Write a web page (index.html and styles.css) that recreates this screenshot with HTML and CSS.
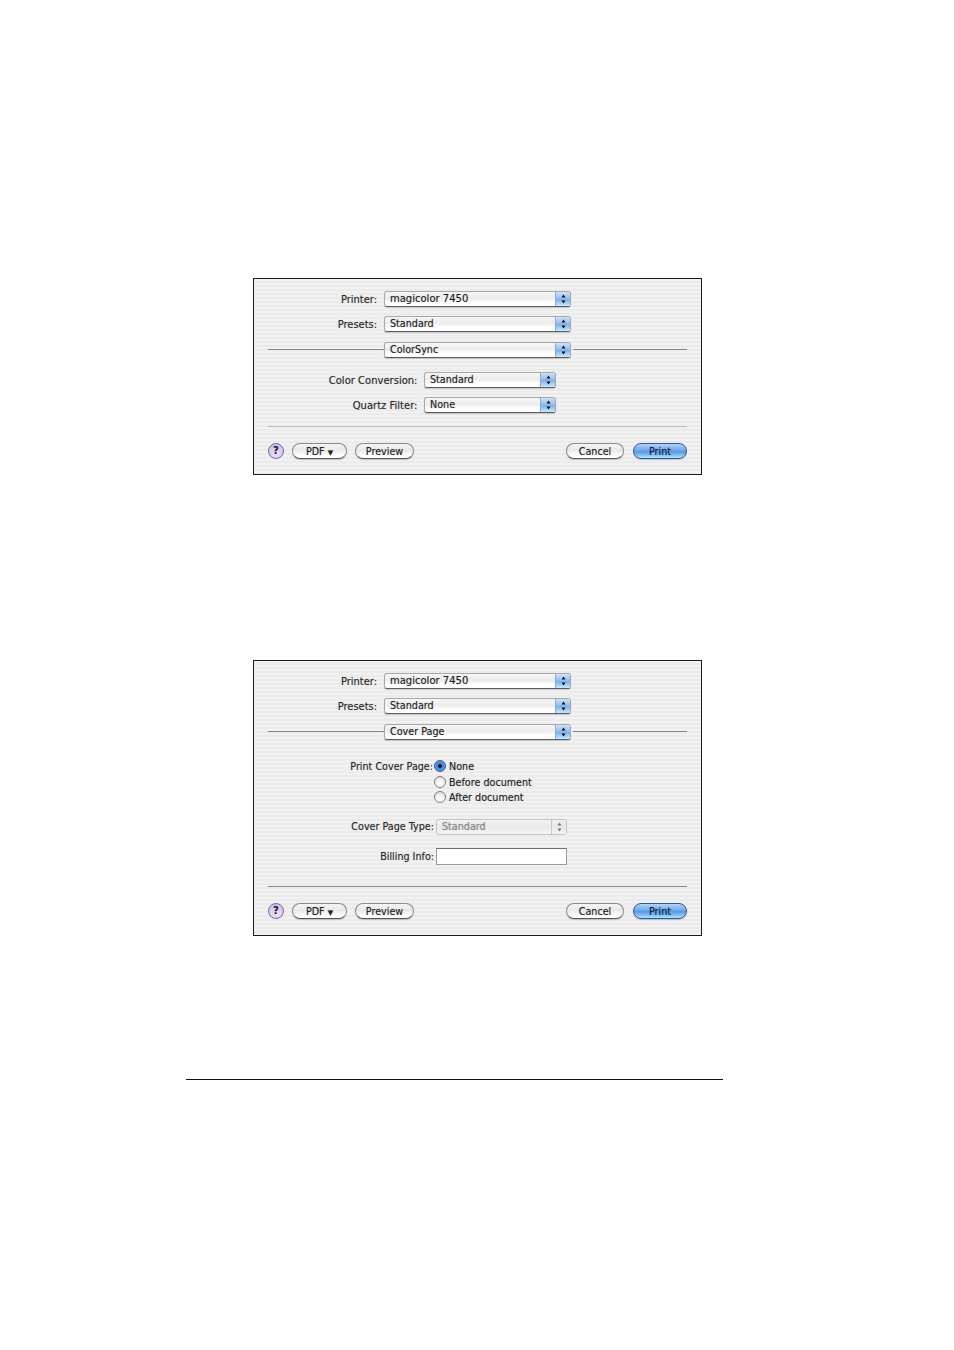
FILE: index.html
```html
<!DOCTYPE html>
<html lang="en">
<head>
<meta charset="utf-8">
<title>Print dialogs</title>
<link rel="stylesheet" href="styles.css">
</head>
<body>
<main class="page">
  <section class="dialog first">
    <div class="row main"><span class="label">Printer:</span><div class="select"><span class="value model">magicolor 7450</span><span class="stepper"><svg width="7" height="12" viewBox="0 0 7 12"><path d="M3.5 1.5 5.5 4.5h-4zM3.5 10.5 1.5 7.5h4z"/></svg></span></div></div>
    <div class="row main"><span class="label">Presets:</span><div class="select"><span class="value">Standard</span><span class="stepper"><svg width="7" height="12" viewBox="0 0 7 12"><path d="M3.5 1.5 5.5 4.5h-4zM3.5 10.5 1.5 7.5h4z"/></svg></span></div></div>
    <div class="row divider"><span class="line left"></span><div class="select"><span class="value">ColorSync</span><span class="stepper"><svg width="7" height="12" viewBox="0 0 7 12"><path d="M3.5 1.5 5.5 4.5h-4zM3.5 10.5 1.5 7.5h4z"/></svg></span></div><span class="line right"></span></div>
    <div class="row sub group-start"><span class="label">Color Conversion:</span><div class="select"><span class="value">Standard</span><span class="stepper"><svg width="7" height="12" viewBox="0 0 7 12"><path d="M3.5 1.5 5.5 4.5h-4zM3.5 10.5 1.5 7.5h4z"/></svg></span></div></div>
    <div class="row sub"><span class="label">Quartz Filter:</span><div class="select"><span class="value">None</span><span class="stepper"><svg width="7" height="12" viewBox="0 0 7 12"><path d="M3.5 1.5 5.5 4.5h-4zM3.5 10.5 1.5 7.5h4z"/></svg></span></div></div>
    <hr class="sep light">
    <div class="footer">
      <span class="help">?</span>
      <span class="btn pdf">PDF <span class="caret">▼</span></span>
      <span class="btn preview">Preview</span>
      <span class="spacer"></span>
      <span class="btn cancel">Cancel</span>
      <span class="btn print">Print</span>
    </div>
  </section>

  <section class="dialog second">
    <div class="row main"><span class="label">Printer:</span><div class="select"><span class="value model">magicolor 7450</span><span class="stepper"><svg width="7" height="12" viewBox="0 0 7 12"><path d="M3.5 1.5 5.5 4.5h-4zM3.5 10.5 1.5 7.5h4z"/></svg></span></div></div>
    <div class="row main"><span class="label">Presets:</span><div class="select"><span class="value">Standard</span><span class="stepper"><svg width="7" height="12" viewBox="0 0 7 12"><path d="M3.5 1.5 5.5 4.5h-4zM3.5 10.5 1.5 7.5h4z"/></svg></span></div></div>
    <div class="row divider"><span class="line left"></span><div class="select"><span class="value">Cover Page</span><span class="stepper"><svg width="7" height="12" viewBox="0 0 7 12"><path d="M3.5 1.5 5.5 4.5h-4zM3.5 10.5 1.5 7.5h4z"/></svg></span></div><span class="line right"></span></div>
    <div class="radio-block">
      <span class="label">Print Cover Page:</span>
      <div class="radios">
        <div class="radio-row"><span class="radio on"></span>None</div>
        <div class="radio-row"><span class="radio"></span>Before document</div>
        <div class="radio-row"><span class="radio"></span>After document</div>
      </div>
    </div>
    <div class="row cover type"><span class="label">Cover Page Type:</span><div class="select disabled"><span class="value">Standard</span><span class="stepper"><svg width="7" height="12" viewBox="0 0 7 12"><path d="M3.5 1.5 5.5 4.5h-4zM3.5 10.5 1.5 7.5h4z"/></svg></span></div></div>
    <div class="row cover billing"><span class="label">Billing Info:</span><div class="input"></div></div>
    <hr class="sep dark">
    <div class="footer">
      <span class="help">?</span>
      <span class="btn pdf">PDF <span class="caret">▼</span></span>
      <span class="btn preview">Preview</span>
      <span class="spacer"></span>
      <span class="btn cancel">Cancel</span>
      <span class="btn print">Print</span>
    </div>
  </section>

  <hr class="page-rule">
</main>
</body>
</html>
```

FILE: styles.css
```css
* { box-sizing: border-box; }
html, body { margin: 0; background: #fff; }
body { font-family: "DejaVu Sans", "Liberation Sans", sans-serif; font-size: 9.6px; color: #222; }
.page { height: 1350px; padding-top: 278px; overflow: hidden; }

.dialog {
  width: 449px;
  margin-left: 253px;
  border: 1px solid #1c1c1c;
  padding: 12px 14px 0;
  background: repeating-linear-gradient(180deg, #f1f1f1 0, #f1f1f1 2px, #ebebeb 2px, #ebebeb 4px);
  text-shadow: 0 0 1px rgba(0,0,0,.3);
}
.dialog.first { height: 197px; }
.dialog.second { height: 276px; margin-top: 185px; }

.row { display: flex; align-items: center; height: 16px; margin-top: 9px; }
.row:first-child { margin-top: 0; }
.label { text-align: right; white-space: nowrap; flex: none; color: #2a2a2a; }
.row.main .label { width: 109px; margin-right: 7px; font-size: 9.9px; }
.row.main .select { width: 187px; }
.row.sub .label { width: 149.5px; margin-right: 6.5px; font-size: 10px; }
.row.sub .select { width: 132px; }
.row.group-start { margin-top: 14px; }
.row.divider { margin-top: 10px; }
.line { height: 1px; background: #8a8a8a; flex: none; margin-bottom: 1px; }
.line.left { width: 116px; }
.line.right { width: 114px; margin-left: 2px; }
.row.divider .select { width: 187px; }

.select {
  display: flex;
  height: 16px;
  flex: none;
  border: 1px solid #a8a8a8;
  border-bottom: 1px solid #5c5c5c;
  border-radius: 3px;
  background: linear-gradient(180deg, #f6f6f6 0, #ececec 45%, #fff 75%, #fff 100%);
  box-shadow: 0 1px 1px rgba(0,0,0,.18);
  overflow: hidden;
}
.value { flex: 1; padding-left: 5px; line-height: 14.5px; color: #1d1d1d; white-space: nowrap; }
.value.model { font-size: 10px; }
.stepper {
  flex: none;
  width: 15px;
  display: flex;
  align-items: center;
  justify-content: center;
  background: linear-gradient(180deg, #cfe2f8 0, #9cc3f1 40%, #7cb2ee 55%, #c8eafc 100%);
  border-left: 1px solid #8faad0;
}
.stepper svg { fill: #111; display: block; }

.select.disabled { border-color: #c4c4c4; box-shadow: none; background: linear-gradient(180deg, #f2f2f2, #e9e9e9 50%, #f6f6f6); }
.select.disabled .value { color: #8c8c8c; }
.select.disabled .stepper { background: linear-gradient(180deg, #f0f0f0, #e8e8e8 50%, #f4f4f4); border-left-color: #c8c8c8; }
.select.disabled .stepper svg { fill: #777; }

.radio-block { display: flex; margin-top: 1px; padding-top: 18px; }
.radio-block .label { width: 165px; margin-right: 1px; line-height: 15px; }
.radios { display: flex; flex-direction: column; }
.radio-row { display: flex; align-items: center; height: 15.5px; white-space: nowrap; color: #222; }
.radio {
  width: 12px;
  height: 12px;
  margin-right: 3px;
  margin-top: -1px;
  border-radius: 50%;
  border: 1px solid #808080;
  background: radial-gradient(circle at 50% 75%, #fff 0, #f2f2f2 50%, #d0d0d0 100%);
}
.radio.on {
  border-color: #2a5ea8;
  background: radial-gradient(circle, #111 0, #111 1.5px, #3a82de 2.2px, #6aa8ee 100%);
}
.row.cover .label { width: 166px; margin-right: 2px; }
.row.cover .select, .input { width: 131px; }
.row.type { margin-top: 13px; }
.row.billing { height: 17px; margin-top: 13px; }
.input { height: 17px; background: #fff; border: 1px solid #9a9a9a; border-top-color: #6e6e6e; }

.sep { border: 0; height: 1px; margin: 13px 0 0; }
.sep.light { background: #bcbcbc; }
.sep.dark { background: #8a8a8a; margin-top: 21px; }

.footer { display: flex; align-items: center; height: 17px; margin-top: 15px; }
.sep.dark + .footer { margin-top: 16px; }
.spacer { flex: 1; }
.help {
  width: 16px;
  height: 16px;
  flex: none;
  border-radius: 50%;
  border: 1px solid #7a6a9a;
  background: radial-gradient(circle at 50% 70%, #efe4ff 0, #cdb8f2 90%);
  font-weight: bold;
  font-size: 10px;
  line-height: 14px;
  text-align: center;
  color: #222;
  margin-right: 8px;
}
.btn {
  height: 16px;
  flex: none;
  border-radius: 8px;
  border: 1px solid #8c8c8c;
  border-bottom-color: #555;
  background: linear-gradient(180deg, #f5f5f5 0, #e9e9e9 45%, #fff 85%);
  box-shadow: 0 1px 1px rgba(0,0,0,.2);
  text-align: center;
  line-height: 15px;
  color: #222;
}
.caret { font-size: 7px; }
.btn.pdf { width: 55px; margin-right: 8px; }
.btn.preview { width: 59px; }
.btn.cancel { width: 58px; margin-right: 9px; }
.btn.print {
  width: 54px;
  border-color: #2c5a9c;
  background: linear-gradient(180deg, #b4d3f7 0, #6ea8ec 45%, #5498ea 55%, #aee2fb 100%);
  color: #10203a;
}

.page-rule { width: 537px; height: 1px; border: 0; background: #111; margin: 143px 0 0 186px; }
```
